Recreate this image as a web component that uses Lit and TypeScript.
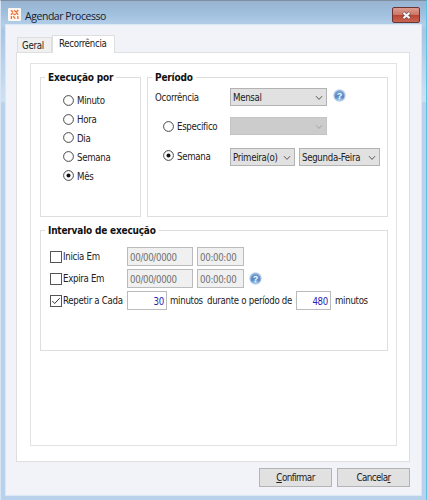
import { LitElement, html, css, svg } from 'lit';
import { customElement, property } from 'lit/decorators.js';
import { classMap } from 'lit/directives/class-map.js';

@customElement('combo-box')
export class ComboBox extends LitElement {
  static styles = css`
    :host {
      display: flex;
      flex: none;
      box-sizing: border-box;
      height: 18px;
      align-items: center;
      justify-content: space-between;
      padding: 1px 3px 0 2px;
      border: 1px solid #b3b3b3;
      background: #e1e1e1;
    }

    :host([disabled]) {
      border-color: #c4c4c4;
      background: #cccccc;
    }

    svg {
      flex: none;
      fill: none;
      stroke: #555;
    }

    :host([disabled]) svg {
      stroke: #a5a5a5;
    }
  `;

  @property() value = '';
  @property({ type: Boolean, reflect: true }) disabled = false;

  render() {
    return html`
      <span>${this.value}</span>
      <svg width="8" height="6" viewBox="0 0 8 6"><path d="M1 1.2 4 4.4 7 1.2" /></svg>
    `;
  }
}

@customElement('help-icon')
export class HelpIcon extends LitElement {
  static styles = css`
    :host {
      display: block;
      width: 13px;
      height: 13px;
    }

    svg {
      display: block;
    }

    text {
      font: bold 8.5px 'Liberation Sans', sans-serif;
      letter-spacing: 0;
      fill: #fff;
      text-anchor: middle;
    }
  `;

  render() {
    return html`
      <svg width="13" height="13" viewBox="0 0 13 13">
        <defs>
          <radialGradient id="ball" cx="50%" cy="95%" r="90%">
            <stop offset="0" stop-color="#a6d2f4" />
            <stop offset="0.5" stop-color="#5488c4" />
            <stop offset="1" stop-color="#7ba3d4" />
          </radialGradient>
        </defs>
        <circle cx="6.5" cy="6.5" r="6.2" fill="#b9cfe8" />
        <circle cx="6.5" cy="6.5" r="5" fill="url(#ball)" />
        <text x="6.5" y="9.6">?</text>
      </svg>
    `;
  }
}

@customElement('app-root')
export class AppRoot extends LitElement {
  static styles = css`
    :host {
      display: block;
      width: 427px;
      height: 500px;
      color: #222;
      font: 9.6px/14px 'DejaVu Sans Condensed', 'DejaVu Sans', sans-serif;
      letter-spacing: -0.3px;
      white-space: nowrap;
    }

    * {
      box-sizing: border-box;
    }

    .window {
      display: flex;
      flex-direction: column;
      width: 427px;
      height: 500px;
      padding: 0 4px 4px;
      background: linear-gradient(#99b4d1 0, #9fbfde 12px, #b4cee8 24px, #a9c5e2 30px, #cfe1f3 100px, #b9d1ea 102px);
      border-left: 1px solid #d5e5f5;
      border-right: 1px solid #58c4e8;
      border-top: 1px solid #7d8fa3;
    }

    .titlebar {
      display: flex;
      height: 23px;
      padding: 6px 2px 0 3px;
      align-items: flex-start;
    }

    .logo {
      display: block;
      margin-top: 1px;
    }

    .title {
      flex: 1;
      margin-left: 4px;
      color: #16202c;
      font: 10.5px/18px 'Open Sans', 'Noto Sans', sans-serif;
      letter-spacing: -0.45px;
    }

    .close {
      display: flex;
      width: 28px;
      height: 16px;
      align-items: center;
      justify-content: center;
      border: 1px solid #6d3532;
      border-radius: 2px;
      background: linear-gradient(#dc9b90 0, #cd7668 48%, #b84431 50%, #c86552 100%);
    }

    .body {
      display: flex;
      flex: 1;
      flex-direction: column;
      padding: 10px 11px 7px 10px;
      border: 1px solid #dae7f4;
      background: #f2f3f9;
    }

    .tabs {
      display: flex;
      align-items: flex-end;
      padding-left: 1px;
    }

    .tab {
      width: 35px;
      height: 15px;
      padding: 1px 0 0 4px;
      border: 1px solid #dedede;
      border-bottom: 0;
      background: #f0f0f0;
    }

    .tab.active {
      z-index: 1;
      width: 63px;
      height: 18px;
      margin-bottom: -1px;
      padding: 1px 0 0 6px;
      background: #fff;
    }

    .page {
      height: 410px;
      padding: 10px 12px 15px 13px;
      border: 1px solid #dfdfdf;
      background: #fff;
    }

    .panel {
      height: 383px;
      padding: 5px 8px 0 9px;
      border: 1px solid #e3e3e3;
    }

    .columns {
      display: flex;
      gap: 6px;
    }

    .group {
      height: 140px;
      margin: 8px 0 0;
      border: 1px solid #dedede;
    }

    .legend {
      width: fit-content;
      height: 14px;
      margin: -7px 0 0 4px;
      padding: 0 3px;
      background: #fff;
      color: #111;
      font-weight: bold;
      font-size: 10px;
      letter-spacing: -0.2px;
    }

    .unit {
      flex: none;
      width: 101px;
    }

    .period {
      flex: none;
      width: 241px;
    }

    .interval {
      width: 348px;
      height: 121px;
      margin-top: 13px;
    }

    .row {
      display: flex;
      align-items: center;
    }

    .units {
      padding: 6px 0 0 22px;
    }

    .units .row {
      height: 18.8px;
    }

    .radio {
      display: block;
      flex: none;
      margin-right: 3px;
    }

    .choice {
      display: flex;
      align-items: center;
    }

    .choice .label {
      padding-top: 2px;
    }

    .occurrence {
      height: 18px;
      margin-top: 3px;
      padding-left: 7px;
    }

    .occurrence .label {
      width: 75px;
      padding-top: 1px;
    }

    .occurrence combo-box {
      width: 97px;
      margin-right: 6px;
    }

    .occurrence help-icon {
      margin-bottom: 4px;
    }

    .detail {
      height: 18px;
      margin-top: 11px;
      padding-left: 15px;
    }

    .detail .choice {
      width: 67px;
    }

    .detail + .detail {
      margin-top: 13px;
    }

    .detail + .detail .choice {
      margin-bottom: 3px;
    }

    .detail .wide {
      width: 97px;
    }

    .detail .ordinal {
      width: 65px;
      margin-right: 4px;
    }

    .detail .weekday {
      width: 81px;
    }

    .schedule {
      padding: 9px 0 0 9px;
    }

    .schedule .row {
      height: 19px;
      margin-bottom: 3px;
    }

    .check {
      display: flex;
      flex: none;
      align-items: center;
      width: 77px;
    }

    .box {
      display: block;
      flex: none;
      margin-right: 1px;
    }

    .field {
      flex: none;
      height: 19px;
      padding: 3px 2px 0 2px;
      border: 1px solid #b9bbbd;
      background: #fff;
      color: #2a1fb5;
      text-align: right;
    }

    .field.off {
      background: #f0f0f0;
      color: #6f6f6f;
      text-align: left;
    }

    .date {
      width: 66px;
      margin-right: 4px;
    }

    .time {
      width: 47px;
      margin-right: 5px;
    }

    .every {
      width: 40px;
      margin-right: 3px;
    }

    .minutes {
      flex: none;
      width: 37px;
    }

    .during {
      flex: none;
      width: 89px;
    }

    .span {
      width: 35px;
      margin-right: 4px;
    }

    .actions {
      display: flex;
      justify-content: flex-end;
      gap: 5px;
      margin-top: 6px;
    }

    .button {
      width: 73px;
      height: 19px;
      border: 1px solid #b4b4b4;
      background: #e1e1e1;
      font-size: 9.8px;
      line-height: 18px;
      letter-spacing: -0.6px;
      text-align: center;
    }
  `;

  units = ['Minuto', 'Hora', 'Dia', 'Semana', 'Mês'];
  unit = 'Mês';

  radio(label: string, on: boolean) {
    return html`
      <div class="choice">
        <svg class="radio" width="11" height="11" viewBox="0 0 11 11">
          <circle cx="5.5" cy="5.5" r="4.9" fill="#fff" stroke="#333" stroke-width="0.9" />
          ${on ? svg`<circle cx="5.5" cy="5.5" r="2" fill="#111" />` : ''}
        </svg>
        <span class="label">${label}</span>
      </div>
    `;
  }

  check(label: string, on: boolean) {
    return html`
      <div class="check">
        <svg class="box" width="12" height="12" viewBox="0 0 12 12">
          <rect x="0.5" y="0.5" width="11" height="11" fill="#fff" stroke="#555" />
          ${on ? svg`<path d="M2.3 6 4.7 8.5 9.7 3.2" fill="none" stroke="#333" />` : ''}
        </svg>
        <span>${label}</span>
      </div>
    `;
  }

  field(value: string, kind: string, off = false) {
    return html`<div class=${classMap({ field: true, off, [kind]: true })}>${value}</div>`;
  }

  render() {
    return html`
      <div class="window">
        <div class="titlebar">
          <svg class="logo" width="13" height="13" viewBox="0 0 13 13">
            <rect width="13" height="13" rx="1" fill="#fff7f1" />
            <path
              d="M3 2.2 5.2 4.4M6.2 2.2 8 4M10.2 2 8 4.6M2.8 6.8 5.2 4.8M5.4 6.6 7.8 6.2M8 4.6 10.2 6.8M3.4 8V11M5.2 8.2 7.4 10.6M9.8 8V11"
              fill="none"
              stroke="#f0733c"
              stroke-width="1.4"
            />
          </svg>
          <span class="title">Agendar Processo</span>
          <div class="close">
            <svg width="11" height="9" viewBox="0 0 11 9">
              <path d="M2.2 1.7 8.8 7.3M8.8 1.7 2.2 7.3" stroke="#5a3a3c" stroke-width="3.4" />
              <path d="M2.4 1.9 8.6 7.1M8.6 1.9 2.4 7.1" stroke="#f4f4f4" stroke-width="2.1" />
            </svg>
          </div>
        </div>

        <div class="body">
          <div class="tabs">
            <div class="tab">Geral</div>
            <div class="tab active">Recorrência</div>
          </div>
          <div class="page">
            <div class="panel">
              <div class="columns">
                <div class="group unit">
                  <div class="legend">Execução por</div>
                  <div class="units">
                    ${this.units.map((u) => html`<div class="row">${this.radio(u, u === this.unit)}</div>`)}
                  </div>
                </div>

                <div class="group period">
                  <div class="legend">Período</div>
                  <div class="row occurrence">
                    <span class="label">Ocorrência</span>
                    <combo-box value="Mensal"></combo-box>
                    <help-icon></help-icon>
                  </div>
                  <div class="row detail">
                    ${this.radio('Especifico', false)}
                    <combo-box class="wide" disabled></combo-box>
                  </div>
                  <div class="row detail">
                    ${this.radio('Semana', true)}
                    <combo-box class="ordinal" value="Primeira(o)"></combo-box>
                    <combo-box class="weekday" value="Segunda-Feira"></combo-box>
                  </div>
                </div>
              </div>

              <div class="group interval">
                <div class="legend">Intervalo de execução</div>
                <div class="schedule">
                  <div class="row">
                    ${this.check('Inicia Em', false)}
                    ${this.field('00/00/0000', 'date', true)}
                    ${this.field('00:00:00', 'time', true)}
                  </div>
                  <div class="row">
                    ${this.check('Expira Em', false)}
                    ${this.field('00/00/0000', 'date', true)}
                    ${this.field('00:00:00', 'time', true)}
                    <help-icon></help-icon>
                  </div>
                  <div class="row">
                    ${this.check('Repetir a Cada', true)}
                    ${this.field('30', 'every')}
                    <span class="minutes">minutos</span>
                    <span class="during">durante o período de</span>
                    ${this.field('480', 'span')}
                    <span>minutos</span>
                  </div>
                </div>
              </div>
            </div>
          </div>

          <div class="actions">
            <div class="button"><u>C</u>onfirmar</div>
            <div class="button">Cancela<u>r</u></div>
          </div>
        </div>
      </div>
    `;
  }
}
